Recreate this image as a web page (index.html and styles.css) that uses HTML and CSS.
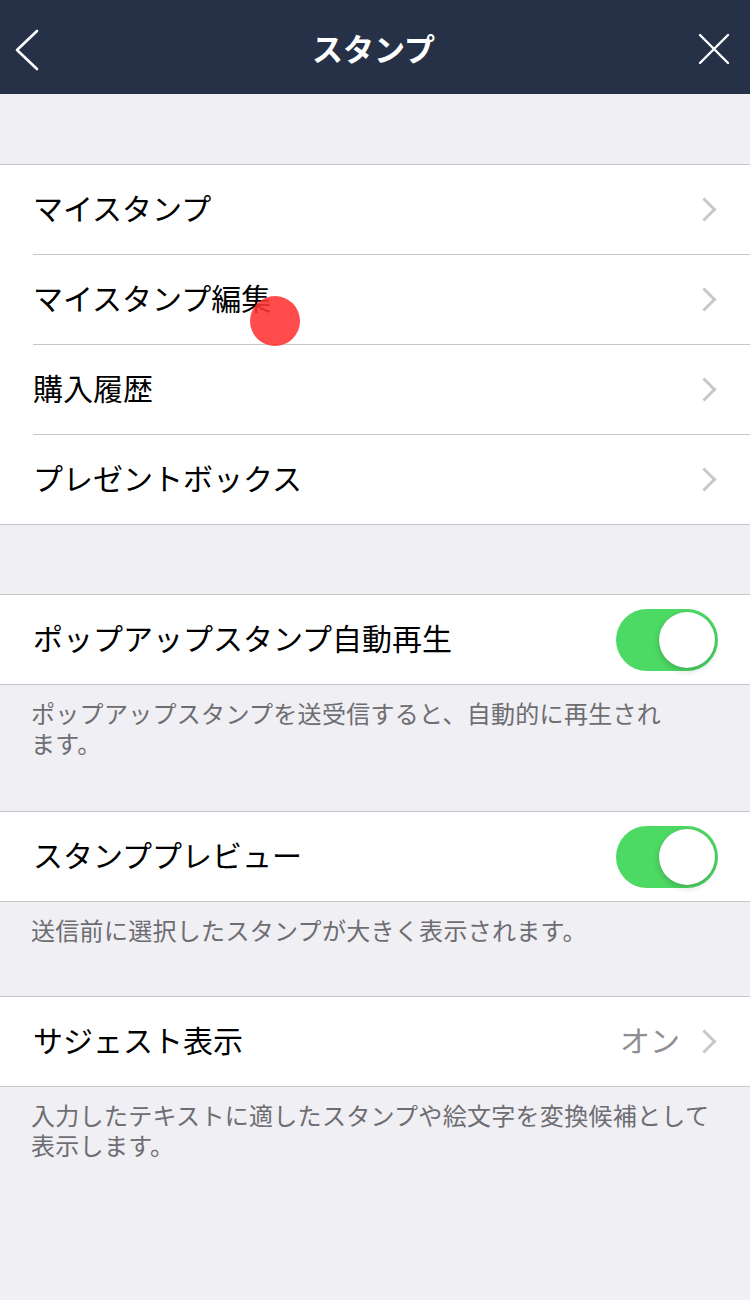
FILE: index.html
```html
<!DOCTYPE html>
<html lang="ja">
<head>
<meta charset="utf-8">
<title>スタンプ</title>
<link rel="stylesheet" href="styles.css">
</head>
<body>
<header class="nav">
  <svg class="nav-back" width="30" height="44" viewBox="0 0 30 44"><path d="M23 3 L3 22 L23 41" fill="none" stroke="#fff" stroke-width="2.6" stroke-linecap="round" stroke-linejoin="round"/></svg>
  <h1 class="nav-title">スタンプ</h1>
  <svg class="nav-close" width="34" height="32" viewBox="0 0 34 32"><path d="M3 2 L31 30 M31 2 L3 30" fill="none" stroke="#fff" stroke-width="2.4" stroke-linecap="round"/></svg>
</header>

<main class="content">
  <div class="spacer"></div>
  <section class="group">
    <div class="row"><span class="label">マイスタンプ</span><span class="chev"></span></div>
    <div class="row"><span class="label">マイスタンプ編集</span><span class="chev"></span></div>
    <div class="row"><span class="label">購入履歴</span><span class="chev"></span></div>
    <div class="row last"><span class="label">プレゼントボックス</span><span class="chev"></span></div>
  </section>
  <div class="spacer small"></div>
  <section class="group">
    <div class="row last"><span class="label">ポップアップスタンプ自動再生</span><span class="toggle"><span class="knob"></span></span></div>
  </section>
  <p class="note two">ポップアップスタンプを送受信すると、自動的に再生され<br>ます。</p>
  <section class="group">
    <div class="row last"><span class="label">スタンププレビュー</span><span class="toggle"><span class="knob"></span></span></div>
  </section>
  <p class="note">送信前に選択したスタンプが大きく表示されます。</p>
  <section class="group">
    <div class="row last"><span class="label">サジェスト表示</span><span class="value">オン</span><span class="chev"></span></div>
  </section>
  <p class="note">入力したテキストに適したスタンプや絵文字を変換候補として<br>表示します。</p>
</main>

<div class="touch"></div>
</body>
</html>
```

FILE: styles.css
```css
html, body {
  margin: 0;
  padding: 0;
}
body {
  width: 750px;
  height: 1300px;
  overflow: hidden;
  background: #efeff4;
  font-family: "Noto Sans CJK JP", "Noto Sans", sans-serif;
  position: relative;
}
.nav {
  height: 94px;
  background: #263148;
  display: flex;
  align-items: center;
  justify-content: space-between;
  padding: 0 19px 0 14px;
  box-sizing: border-box;
}
.nav-back {
  display: block;
  margin-top: 6px;
}
.nav-close {
  display: block;
  margin-top: 4px;
}
.nav-title {
  margin: 0 0 0 6px;
  color: #fff;
  font-size: 31px;
  font-weight: 700;
  line-height: 1;
}
.spacer {
  height: 70px;
}
.spacer.small {
  height: 69px;
}
.group {
  background: #fff;
  border-top: 1px solid #c8c7cc;
  border-bottom: 1px solid #c8c7cc;
  padding-left: 33px;
}
.row {
  height: 89px;
  display: flex;
  align-items: center;
  padding-right: 32px;
  border-bottom: 1px solid #c8c7cc;
}
.row.last {
  border-bottom: none;
}
.label {
  flex: 1;
  font-size: 30px;
  line-height: 1;
  color: #000;
  padding-bottom: 6px;
}
.value {
  font-size: 30px;
  line-height: 1;
  color: #8e8e93;
  margin-right: 16px;
  padding-bottom: 6px;
}
.chev {
  width: 14px;
  height: 14px;
  border-top: 3px solid #c7c7cc;
  border-right: 3px solid #c7c7cc;
  transform: rotate(45deg);
  margin-right: 5px;
}
.toggle {
  width: 102px;
  height: 62px;
  border-radius: 31px;
  background: #4cd964;
  display: flex;
  justify-content: flex-end;
  align-items: center;
  padding: 3px;
  box-sizing: border-box;
}
.knob {
  width: 56px;
  height: 56px;
  border-radius: 50%;
  background: #fff;
  box-shadow: 0 3px 6px rgba(0,0,0,0.18), 0 0 1px rgba(0,0,0,0.2);
}
.note {
  margin: 0;
  padding: 13px 30px 51px 31px;
  font-size: 24px;
  line-height: 30px;
  color: #6d6d72;
  letter-spacing: 0.3px;
}
.note.two {
  padding-bottom: 53px;
}
.touch {
  position: absolute;
  left: 250px;
  top: 296px;
  width: 50px;
  height: 50px;
  border-radius: 50%;
  background: rgba(255, 50, 50, 0.88);
}
```
